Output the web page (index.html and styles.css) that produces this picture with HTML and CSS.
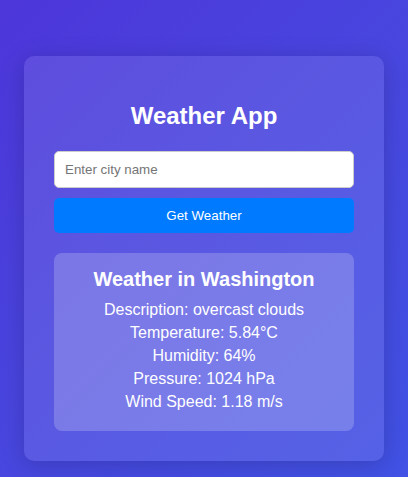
FILE: index.html
```html
<!DOCTYPE html>
<html lang="en">
<head>
<meta charset="UTF-8">
<title>Weather App</title>
<link rel="stylesheet" href="styles.css">
</head>
<body>
  <div class="container">
    <h1 class="title">Weather App</h1>
    <input class="city-input" type="text" placeholder="Enter city name">
    <button class="get-btn" type="button">Get Weather</button>
    <div class="result">
      <h2 class="result-title">Weather in Washington</h2>
      <p class="line">Description: overcast clouds</p>
      <p class="line">Temperature: 5.84°C</p>
      <p class="line">Humidity: 64%</p>
      <p class="line">Pressure: 1024 hPa</p>
      <p class="line">Wind Speed: 1.18 m/s</p>
    </div>
  </div>
</body>
</html>
```
FILE: styles.css
```css
html, body {
  margin: 0;
  padding: 0;
}

body {
  font-family: "Liberation Sans", Arial, sans-serif;
  min-height: 100vh;
  display: flex;
  justify-content: center;
  align-items: center;
  background: linear-gradient(135deg, #4d36da 0%, #4846df 50%, #4152e5 100%);
  color: #fff;
}

.container {
  box-sizing: border-box;
  width: 360px;
  margin-top: 40px;
  padding: 30px;
  background: rgba(255, 255, 255, 0.1);
  border-radius: 10px;
  box-shadow: 0 4px 24px rgba(0, 0, 0, 0.18);
  display: flex;
  flex-direction: column;
  text-align: center;
}

.title {
  font-size: 24px;
  font-weight: bold;
  margin: 16px 0 21px;
}

.city-input {
  box-sizing: border-box;
  width: 100%;
  padding: 10px;
  font-family: "Liberation Sans", Arial, sans-serif;
  font-size: 13.333px;
  border: 1px solid #ccc;
  border-radius: 5px;
  background: #fff;
  color: #333;
  outline: none;
}

.city-input::placeholder {
  color: #757575;
}

.get-btn {
  margin-top: 10px;
  width: 100%;
  padding: 10px;
  font-family: "Liberation Sans", Arial, sans-serif;
  font-size: 13.333px;
  border: none;
  border-radius: 5px;
  background: #007bff;
  color: #fff;
}

.result {
  margin-top: 20px;
  padding: 15px;
  background: rgba(255, 255, 255, 0.2);
  border-radius: 8px;
}

.result-title {
  font-size: 20px;
  font-weight: bold;
  margin: 0 0 10px;
}

.line {
  font-size: 16px;
  margin: 5px 0;
}
```
